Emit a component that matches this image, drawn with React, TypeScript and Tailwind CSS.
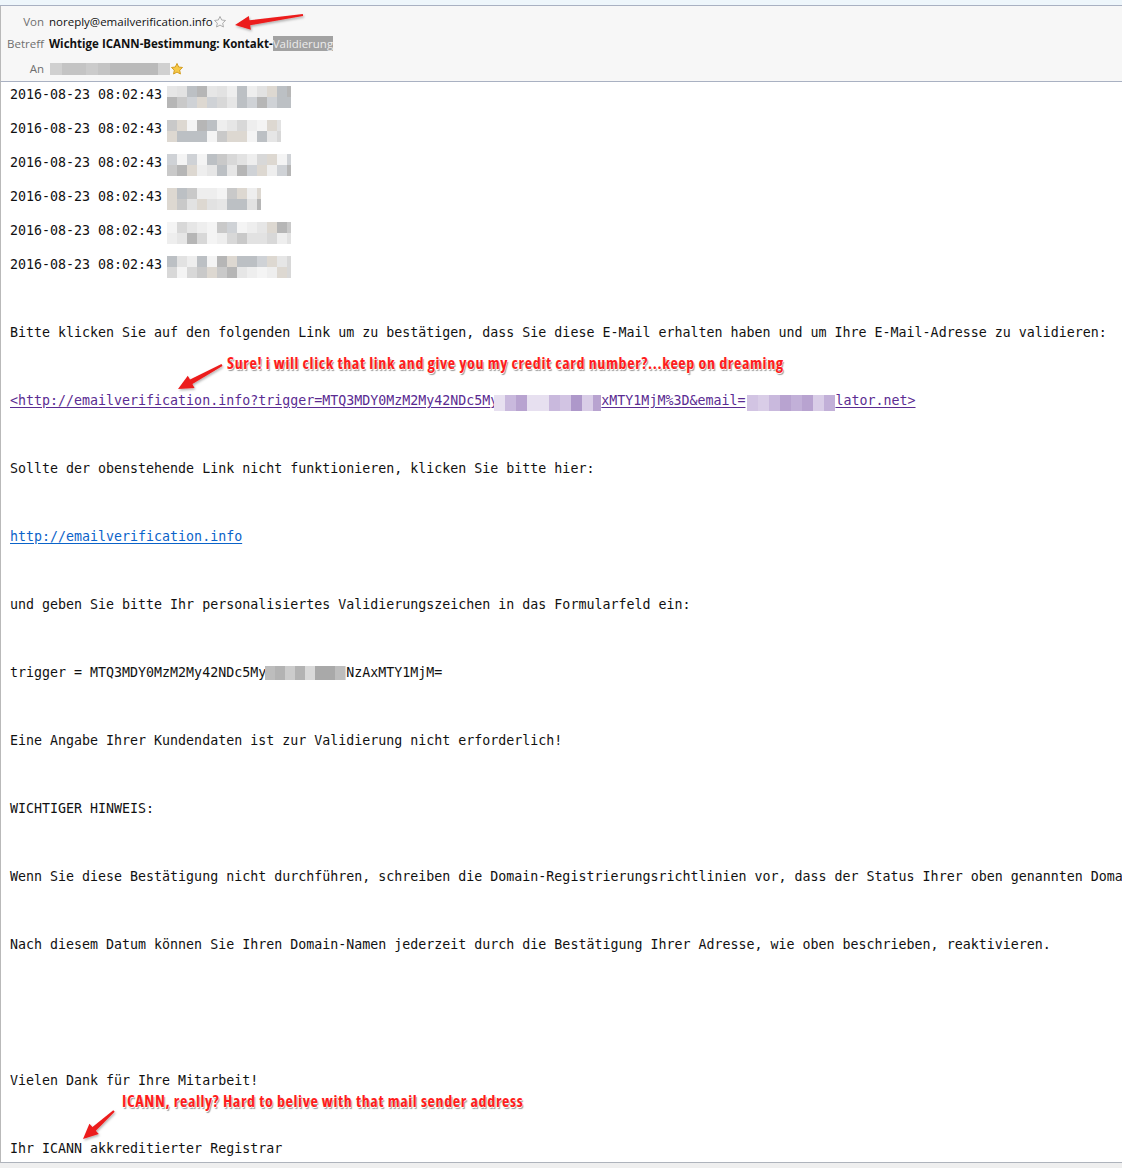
import React from 'react'

const mono = { fontFamily: '"DejaVu Sans Mono", "Liberation Mono", monospace' }

const grays = ['#c9c9c9', '#d8d8d8', '#e6e6e6', '#bcc0c4', '#eeeeee', '#f4f4f4', '#b6b6b6', '#ddd8d1', '#cfd2d6', '#e2e2e2']
const purples = ['#c9b9dd', '#b8a3d0', '#d9cde7', '#e7e0f0', '#ae98ca', '#c2b0d8', '#d2c4e3']
const darkGrays = ['#a9a9a9', '#c2c2c2', '#d9d9d9', '#b3b3b3', '#cccccc', '#bdbdbd']
const anGrays = ['#c4c4c4', '#d0d0d0', '#bababa', '#cbcbcb', '#d6d6d6']

// pixelated (blurred-out) patch, colours picked from a seed
const Pix = ({ w, rows = 2, cell = 10, h = 11, palette, seed = 1 }: { w: number; rows?: number; cell?: number; h?: number; palette: string[]; seed?: number }) => {
  const cols = Math.ceil(w / cell)
  let s = seed * 9301 + 49297
  const next = () => {
    s = (s * 9301 + 49297) % 233280
    return palette[Math.floor((s / 233280) * palette.length)]
  }
  return (
    <span className="inline-flex flex-col align-top overflow-hidden" style={{ width: w }}>
      {Array.from({ length: rows }).map((_, r) => (
        <span key={r} className="flex">
          {Array.from({ length: cols }).map((_, c) => (
            <span key={c} className="shrink-0" style={{ width: cell, height: h, background: next() }} />
          ))}
        </span>
      ))}
    </span>
  )
}

const arrow = (tx: number, ty: number, hx: number, hy: number) => {
  const dx = hx - tx
  const dy = hy - ty
  const len = Math.hypot(dx, dy)
  const ux = dx / len
  const uy = dy / len
  const nx = -uy
  const ny = ux
  const headLen = 15
  const neckX = hx - ux * headLen
  const neckY = hy - uy * headLen
  const p = (x: number, y: number) => `${x.toFixed(1)},${y.toFixed(1)}`
  return [
    p(tx + nx * 1, ty + ny * 1),
    p(neckX + nx * 2.5, neckY + ny * 2.5),
    p(neckX + nx * 7, neckY + ny * 7),
    p(hx, hy),
    p(neckX - nx * 7, neckY - ny * 7),
    p(neckX - nx * 2.5, neckY - ny * 2.5),
    p(tx - nx * 1, ty - ny * 1),
  ].join(' ')
}

const Star = ({ filled }: { filled?: boolean }) => (
  <svg width="14" height="14" viewBox="0 0 24 24" className="inline-block">
    <path
      d="M12 2.5l2.9 6.1 6.6.8-4.9 4.6 1.3 6.6L12 17.3l-5.9 3.3 1.3-6.6-4.9-4.6 6.6-.8z"
      fill={filled ? '#f7c948' : 'none'}
      stroke={filled ? '#d19a1c' : '#a8a8a8'}
      strokeWidth="1.6"
      strokeLinejoin="round"
    />
  </svg>
)

const Note = ({ children, className }: { children: React.ReactNode; className: string }) => (
  <div
    className={`absolute whitespace-nowrap text-[16px] font-bold leading-[18px] tracking-[0.65px] text-[#ff1c1c] font-stretch-[87%] ${className}`}
    style={{ fontFamily: '"Open Sans", "Noto Sans", sans-serif', textShadow: '0 1px 0 #fff, 1px 2px 1px #9a9a9a' }}
  >
    {children}
  </div>
)

type Line = React.ReactNode | null

export default function App() {
  const stamps = [124, 114, 124, 94, 124, 124]

  const lines: Line[] = []
  stamps.forEach((w, i) => {
    lines.push(
      <span>
        2016-08-23 08:02:43 <span className="-ml-[3px]"><Pix w={w} palette={grays} seed={i + 3} /></span>
      </span>
    )
    lines.push(null)
  })
  lines.push(null, null)
  lines.push('Bitte klicken Sie auf den folgenden Link um zu bestätigen, dass Sie diese E-Mail erhalten haben und um Ihre E-Mail-Adresse zu validieren:')
  lines.push(null, null, null)
  lines.push(
    <span className="text-[#5b2c92] underline underline-offset-2">
      {'<http://emailverification.info?trigger=MTQ3MDY0MzM2My42NDc5M'}y
      <span className="-ml-[4px] align-[-3px]"><Pix w={107} rows={1} h={16} cell={11} palette={purples} seed={7} /></span>
      {'xMTY1MjM%3D&email='}
      <span className="ml-[2px] align-[-3px]"><Pix w={88} rows={1} h={16} cell={11} palette={purples} seed={11} /></span>
      {'lator.net>'}
    </span>
  )
  lines.push(null, null, null)
  lines.push('Sollte der obenstehende Link nicht funktionieren, klicken Sie bitte hier:')
  lines.push(null, null, null)
  lines.push(<span className="text-[#0b63c9] underline underline-offset-2">http://emailverification.info</span>)
  lines.push(null, null, null)
  lines.push('und geben Sie bitte Ihr personalisiertes Validierungszeichen in das Formularfeld ein:')
  lines.push(null, null, null)
  lines.push(
    <span>
      trigger = MTQ3MDY0MzM2My42NDc5My
      <span className="-ml-[1px] align-[-2px]"><Pix w={81} rows={1} h={14} palette={darkGrays} seed={5} /></span>
      NzAxMTY1MjM=
    </span>
  )
  lines.push(null, null, null)
  lines.push('Eine Angabe Ihrer Kundendaten ist zur Validierung nicht erforderlich!')
  lines.push(null, null, null)
  lines.push('WICHTIGER HINWEIS:')
  lines.push(null, null, null)
  lines.push('Wenn Sie diese Bestätigung nicht durchführen, schreiben die Domain-Registrierungsrichtlinien vor, dass der Status Ihrer oben genannten Domain-Namen auf inaktiv gesetzt wird.')
  lines.push(null, null, null)
  lines.push('Nach diesem Datum können Sie Ihren Domain-Namen jederzeit durch die Bestätigung Ihrer Adresse, wie oben beschrieben, reaktivieren.')
  lines.push(null, null, null, null, null, null, null)
  lines.push('Vielen Dank für Ihre Mitarbeit!')
  lines.push(null, null, null)
  lines.push('Ihr ICANN akkreditierter Registrar')

  return (
    <div className="relative w-[1122px] h-[1168px] overflow-hidden bg-[#efefef]">
      {/* top strip */}
      <div className="h-[6px] bg-[#eef6fb] border-b border-[#a9b1c2]" />

      {/* message header */}
      <div
        className="h-[76px] bg-[#f7f7f7] border-l border-b border-l-[#b9b9b9] border-b-[#a9b1c2] pt-[5px] text-[11.5px] text-[#111]"
        style={{ fontFamily: '"Open Sans", "Noto Sans", sans-serif' }}
      >
        <div className="flex items-center h-[22px]">
          <span className="w-[43px] text-right text-[#6f6f6f]">Von</span>
          <span className="ml-[5px]">noreply@emailverification.info</span>
          <Star />
        </div>
        <div className="flex items-center h-[22px]">
          <span className="w-[43px] text-right text-[#6f6f6f]">Betreff</span>
          <span className="ml-[5px] font-bold">
            Wichtige ICANN-Bestimmung: Kontakt-<span className="bg-[#a2a2a2] text-[#ececec] font-normal">Validierung</span>
          </span>
        </div>
        <div className="flex items-center h-[22px] mt-[3px]">
          <span className="w-[43px] text-right text-[#6f6f6f]">An</span>
          <span className="ml-[6px] inline-flex items-center">
            <Pix w={120} rows={1} h={12} cell={12} palette={anGrays} seed={2} />
            <Star filled />
          </span>
        </div>
      </div>

      {/* body */}
      <div
        className="relative h-[1081px] bg-white border-l border-b border-l-[#b9b9b9] border-b-[#aeb3bc] pl-[9px] pt-[4px] text-[13.3px] leading-[17px] text-[#111] whitespace-pre overflow-hidden"
        style={mono}
      >
        {lines.map((l, i) => (
          <div key={i} className="h-[17px]">
            {l}
          </div>
        ))}

        <Note className="left-[226px] top-[272px]">Sure! i will click that link and give you my credit card number?...keep on dreaming</Note>
        <Note className="left-[121px] top-[1010px]">ICANN, really? Hard to belive with that mail sender address</Note>
      </div>

      {/* arrows */}
      <svg className="absolute left-0 top-0 pointer-events-none" width="1122" height="1168">
        <defs>
          <filter id="sh" x="-20%" y="-20%" width="140%" height="160%">
            <feDropShadow dx="1" dy="1.5" stdDeviation="0.8" floodColor="#000" floodOpacity="0.3" />
          </filter>
        </defs>
        <g fill="#ec1c1c" filter="url(#sh)">
          <polygon points={arrow(303, 15, 235, 25)} />
          <polygon points={arrow(222, 365, 178, 389)} />
          <polygon points={arrow(114, 1111, 83, 1139)} />
        </g>
      </svg>
    </div>
  )
}
